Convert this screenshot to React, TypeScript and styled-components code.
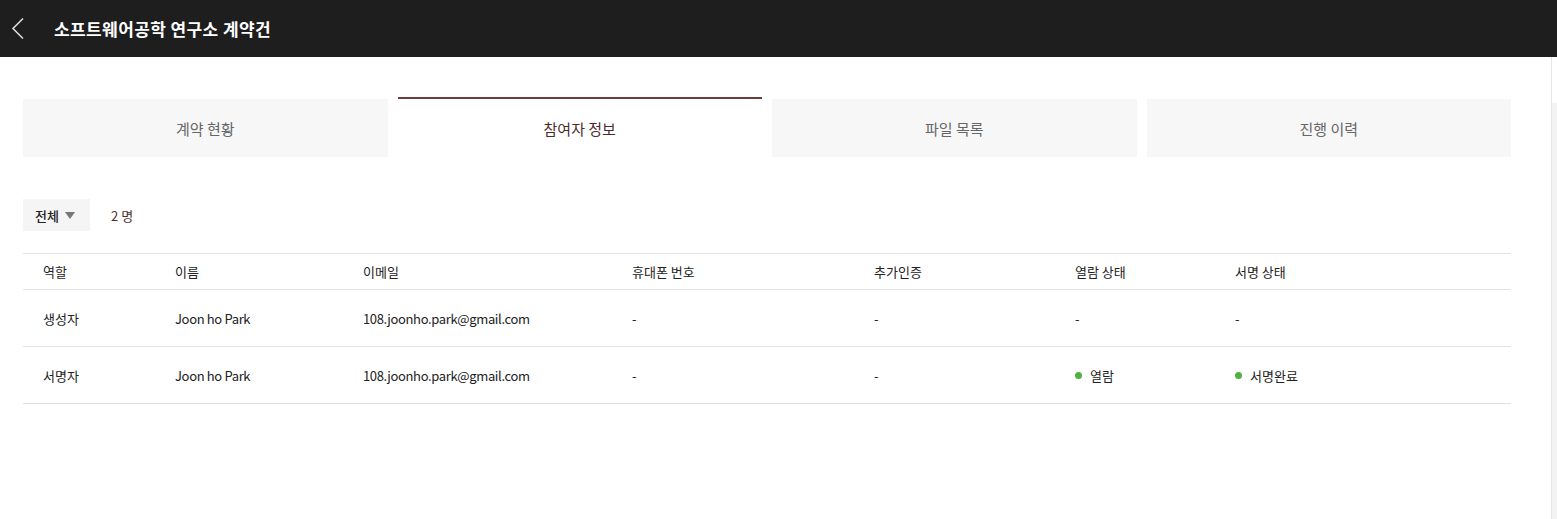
import React, { useState } from "react";
import styled, { createGlobalStyle } from "styled-components";

const GlobalStyle = createGlobalStyle`
  html, body {
    margin: 0;
    padding: 0;
    background: #ffffff;
    font-family: "Noto Sans CJK KR", "Noto Sans", sans-serif;
    color: #222;
  }
  * {
    box-sizing: border-box;
  }
`;

const Page = styled.div`
  width: 100%;
  height: 519px;
  display: flex;
  flex-direction: column;
  overflow: hidden;
`;

const Header = styled.header`
  height: 57px;
  background: #1e1e1e;
  display: flex;
  align-items: center;
  padding-left: 10px;
  flex-shrink: 0;
`;

const BackButton = styled.button`
  background: none;
  border: none;
  padding: 0;
  width: 16px;
  height: 24px;
  display: flex;
  align-items: center;
  justify-content: center;
  cursor: pointer;
  margin-right: 28px;
`;

const Title = styled.h1`
  margin: 0;
  font-size: 17px;
  font-weight: 700;
  color: #ffffff;
  letter-spacing: 0.4px;
`;

const Body = styled.div`
  flex: 1;
  display: flex;
`;

const Main = styled.main`
  flex: 1;
  padding: 40px 40px 0 23px;
`;

const Rail = styled.aside`
  width: 6px;
  border-left: 1px solid #e6e6e6;
  padding-top: 46px;
  display: flex;
`;

const RailFill = styled.div`
  flex: 1;
  background: #f3f3f3;
`;

const Tabs = styled.nav`
  display: grid;
  grid-template-columns: repeat(4, 1fr);
  gap: 10px;
`;

const Tab = styled.button<{ $active?: boolean }>`
  height: 60px;
  border: none;
  border-top: 2px solid ${(p) => (p.$active ? "#6b3c3c" : "transparent")};
  background: ${(p) => (p.$active ? "#ffffff" : "#f7f7f7")};
  background-clip: padding-box;
  font-family: inherit;
  font-size: 15px;
  color: ${(p) => (p.$active ? "#4a2b2b" : "#666")};
  cursor: pointer;
  padding: 0;
`;

const FilterRow = styled.div`
  display: flex;
  align-items: center;
  gap: 21px;
  margin-top: 42px;
`;

const FilterSelect = styled.button`
  height: 32px;
  width: 67px;
  background: #f5f5f5;
  border: none;
  display: flex;
  align-items: center;
  gap: 6px;
  padding: 0 0 0 12px;
  font-family: inherit;
  font-size: 13px;
  font-weight: 500;
  color: #222;
  cursor: pointer;
`;

const Caret = styled.span`
  width: 0;
  height: 0;
  border-left: 5px solid transparent;
  border-right: 5px solid transparent;
  border-top: 7px solid #777;
`;

const Count = styled.span`
  font-size: 13px;
  color: #4f2f2f;
`;

const Table = styled.div`
  margin-top: 22px;
  border-top: 1px solid #e2e2e2;
`;

const Row = styled.div<{ $head?: boolean }>`
  display: grid;
  grid-template-columns: 132px 188px 269px 242px 201px 160px 1fr;
  height: ${(p) => (p.$head ? "36px" : "57px")};
  border-bottom: 1px solid #e2e2e2;
  align-items: center;
`;

const Cell = styled.div<{ $latin?: boolean }>`
  padding-left: 20px;
  font-size: 13px;
  color: #222;
  display: flex;
  align-items: center;
  gap: 8px;
  white-space: nowrap;
  letter-spacing: ${(p) => (p.$latin ? "-0.35px" : "0")};
`;

const Dot = styled.span`
  width: 7px;
  height: 7px;
  border-radius: 50%;
  background: #52b043;
`;

const tabs = ["계약 현황", "참여자 정보", "파일 목록", "진행 이력"];

const columns = ["역할", "이름", "이메일", "휴대폰 번호", "추가인증", "열람 상태", "서명 상태"];

interface Participant {
  role: string;
  name: string;
  email: string;
  phone: string;
  auth: string;
  viewed: string;
  signed: string;
}

const participants: Participant[] = [
  {
    role: "생성자",
    name: "Joon ho Park",
    email: "108.joonho.park@gmail.com",
    phone: "-",
    auth: "-",
    viewed: "",
    signed: "",
  },
  {
    role: "서명자",
    name: "Joon ho Park",
    email: "108.joonho.park@gmail.com",
    phone: "-",
    auth: "-",
    viewed: "열람",
    signed: "서명완료",
  },
];

const Status = ({ label }: { label: string }) =>
  label ? (
    <>
      <Dot />
      {label}
    </>
  ) : (
    <>-</>
  );

const App = () => {
  const [activeTab, setActiveTab] = useState(1);

  return (
    <Page>
      <GlobalStyle />
      <Header>
        <BackButton aria-label="뒤로">
          <svg width="14" height="23" viewBox="0 0 14 23" fill="none">
            <polyline points="12,1.5 2,11.5 12,21.5" stroke="#dcdcdc" strokeWidth="1.6" />
          </svg>
        </BackButton>
        <Title>소프트웨어공학 연구소 계약건</Title>
      </Header>
      <Body>
        <Main>
          <Tabs>
            {tabs.map((t, i) => (
              <Tab key={t} $active={i === activeTab} onClick={() => setActiveTab(i)}>
                {t}
              </Tab>
            ))}
          </Tabs>
          <FilterRow>
            <FilterSelect>
              전체
              <Caret />
            </FilterSelect>
            <Count>2 명</Count>
          </FilterRow>
          <Table>
            <Row $head>
              {columns.map((c) => (
                <Cell key={c}>{c}</Cell>
              ))}
            </Row>
            {participants.map((p) => (
              <Row key={p.role}>
                <Cell>{p.role}</Cell>
                <Cell $latin>{p.name}</Cell>
                <Cell $latin>{p.email}</Cell>
                <Cell>{p.phone}</Cell>
                <Cell>{p.auth}</Cell>
                <Cell>
                  <Status label={p.viewed} />
                </Cell>
                <Cell>
                  <Status label={p.signed} />
                </Cell>
              </Row>
            ))}
          </Table>
        </Main>
        <Rail>
          <RailFill />
        </Rail>
      </Body>
    </Page>
  );
};

export default App;
